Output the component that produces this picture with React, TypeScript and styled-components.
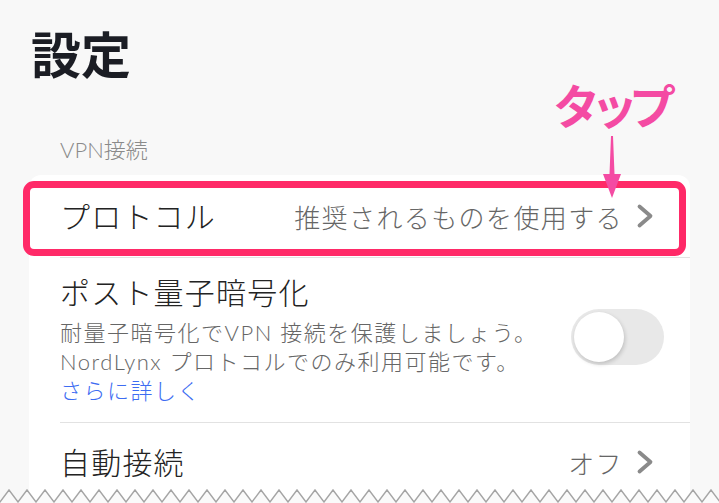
import styled, { createGlobalStyle } from 'styled-components';

const GlobalStyle = createGlobalStyle`
  html, body {
    margin: 0;
    padding: 0;
    background: #f8f8f8;
  }
  body {
    font-family: "Lato", "Noto Sans CJK JP", sans-serif;
    -webkit-font-smoothing: antialiased;
  }
`;

const Page = styled.div`
  position: relative;
  width: 719px;
  height: 503px;
  overflow: hidden;
  padding-top: 25px;
  box-sizing: border-box;
`;

const Title = styled.h1`
  margin: 0 0 0 31px;
  font-size: 50px;
  line-height: 60px;
  font-weight: 700;
  color: #1b1d24;
`;

const SectionLabel = styled.div`
  margin: 51px 0 0 60px;
  font-size: 22px;
  line-height: 28px;
  color: #8a8a8a;
  font-weight: 300;
`;

const Card = styled.div`
  margin: 11px 29px 0 29px;
  padding-left: 31px;
  background: #fff;
  border-radius: 12px 12px 0 0;
  min-height: 340px;
`;

const Row = styled.div<{ $highlight?: boolean; $last?: boolean }>`
  position: relative;
  display: flex;
  align-items: center;
  gap: 16px;
  min-height: 82px;
  padding-right: 26px;
  border-bottom: ${(p) => (p.$last ? 'none' : '1px solid #e2e2e2')};

  ${(p) =>
    p.$highlight &&
    `
    &::after {
      content: '';
      position: absolute;
      top: 6px;
      bottom: 1px;
      left: -37px;
      right: 4px;
      border: 7px solid #ff2a68;
      border-radius: 11px;
      pointer-events: none;
    }
  `}
`;

const TallRow = styled(Row)`
  padding-top: 14px;
  padding-bottom: 17px;
`;

const AutoRow = styled(Row)`
  min-height: 78px;
`;

const RowTitle = styled.div`
  font-size: 30px;
  line-height: 40px;
  font-weight: 300;
  color: #232323;
  letter-spacing: 1.2px;
`;

const RowBody = styled.div`
  flex: 1;
  min-width: 0;
`;

const Description = styled.p`
  margin: 6px 0 0;
  font-size: 22px;
  line-height: 29px;
  font-weight: 300;
  color: #666;
  letter-spacing: 1.5px;
  white-space: nowrap;
`;

const LearnMore = styled.a`
  display: block;
  color: #3d6cf2;
  text-decoration: none;
`;

const Value = styled.div`
  display: flex;
  align-items: center;
  gap: 13px;
  margin-left: auto;
  font-size: 26px;
  font-weight: 300;
  letter-spacing: 1.4px;
  color: #666;
  white-space: nowrap;
`;

const ChevronIcon = styled.svg`
  width: 18px;
  height: 26px;
  margin-right: 10px;
  flex: none;
`;

const Toggle = styled.div`
  position: relative;
  width: 93px;
  height: 56px;
  border-radius: 28px;
  background: #e8e8e8;
  flex: none;
  margin-top: -4px;
`;

const Knob = styled.div`
  position: absolute;
  top: 3px;
  left: 3px;
  width: 50px;
  height: 50px;
  border-radius: 50%;
  background: #fff;
  box-shadow: 1px 2px 4px rgba(0, 0, 0, 0.18);
`;

const TapNote = styled.div`
  position: absolute;
  left: 553px;
  top: 76px;
  font-size: 47px;
  line-height: 60px;
  font-weight: 700;
  color: #f44ba3;
  letter-spacing: -9px;
`;

const Arrow = styled.svg`
  position: absolute;
  left: 600px;
  top: 136px;
  width: 24px;
  height: 64px;
`;

const TornEdge = styled.svg`
  position: absolute;
  left: 0;
  bottom: 0;
  width: 719px;
  height: 15px;
`;

const Chevron = () => (
  <ChevronIcon viewBox="0 0 18 26">
    <path
      d="M3.5 3.5 L14.5 13 L3.5 22.5"
      fill="none"
      stroke="#8a8a8a"
      strokeWidth="3.8"
      strokeLinecap="round"
      strokeLinejoin="round"
    />
  </ChevronIcon>
);

const zigzag = (() => {
  const period = 18;
  const pts: string[] = [];
  for (let x = -period; x <= 719 + period; x += period) {
    pts.push(`${x},14`, `${x + period / 2},2`);
  }
  return pts.join(' ');
})();

export default function App() {
  return (
    <>
      <GlobalStyle />
      <Page>
        <Title>設定</Title>
        <SectionLabel>VPN接続</SectionLabel>
        <Card>
          <Row $highlight>
            <RowTitle>プロトコル</RowTitle>
            <Value>
              推奨されるものを使用する
              <Chevron />
            </Value>
          </Row>
          <TallRow>
            <RowBody>
              <RowTitle>ポスト量子暗号化</RowTitle>
              <Description>
                耐量子暗号化でVPN 接続を保護しましょう。
                <br />
                NordLynx プロトコルでのみ利用可能です。
                <LearnMore href="#">さらに詳しく</LearnMore>
              </Description>
            </RowBody>
            <Toggle>
              <Knob />
            </Toggle>
          </TallRow>
          <AutoRow $last>
            <RowTitle>自動接続</RowTitle>
            <Value>
              オフ
              <Chevron />
            </Value>
          </AutoRow>
        </Card>

        <TapNote>タップ</TapNote>
        <Arrow viewBox="0 0 24 64">
          <polygon points="11,0 13,0 14.5,38 21,38 12,62 3,38 9.5,38" fill="#f44ba3" />
        </Arrow>

        <TornEdge viewBox="0 0 719 15" preserveAspectRatio="none">
          <polygon points={`-20,15 ${zigzag} 740,15`} fill="#fafafa" />
          <polyline points={zigzag} fill="none" stroke="#a5a5a5" strokeWidth="1.4" />
        </TornEdge>
      </Page>
    </>
  );
}
